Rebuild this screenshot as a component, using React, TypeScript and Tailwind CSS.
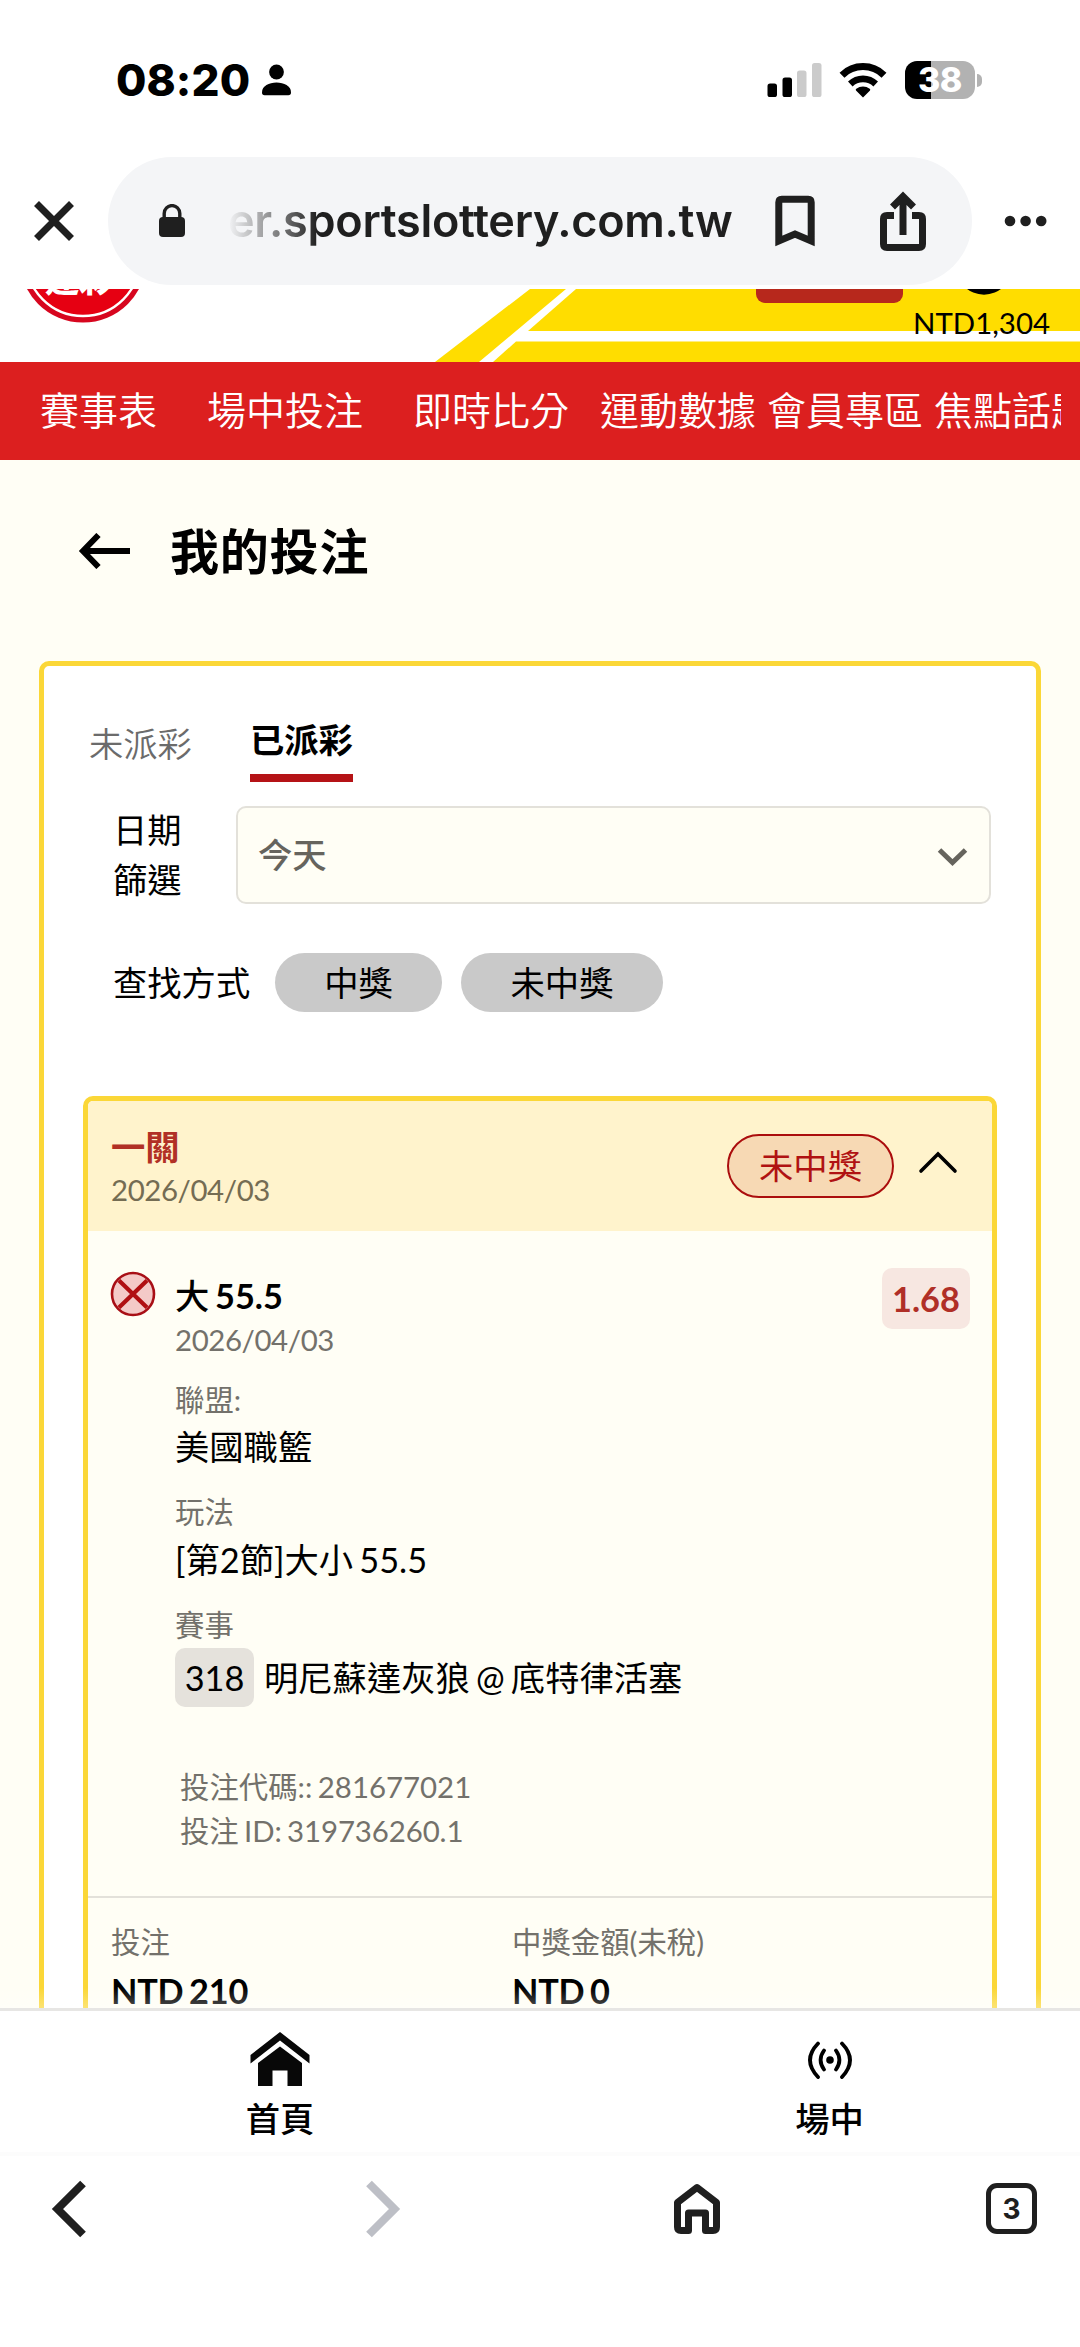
import { ReactNode } from 'react';
import { twMerge } from 'tailwind-merge';

const pageFont = "font-['Lato','Noto_Sans_CJK_TC',sans-serif]";
const systemFont = "font-['Inter',sans-serif]";
const mutedText = 'text-[#73716b]';
const yellowBorder = 'border-[5px] border-[#fbd737]';

const StatusBar = () => {
  return (
    <div className={twMerge('flex h-[157px] shrink-0 pt-[50px] text-black', systemFont)}>
      <div className="flex h-[60px] w-full items-center pl-[116px] pr-[98px]">
        <div className="w-[134px] whitespace-nowrap text-[44px] font-extrabold leading-[60px] tracking-[0.1px]">08:20</div>
        <svg className="ml-[11px]" width="31" height="32" viewBox="0 0 31 32">
          <circle cx="15.5" cy="8" r="7.4" />
          <path d="M1 28.5C1 22 8 18.6 15.5 18.6S30 22 30 28.5q0 2.8-2.6 2.8H3.6Q1 31.3 1 28.5z" />
        </svg>

        <svg className="ml-auto" width="55" height="36" viewBox="0 0 55 36">
          <rect x="0.5" y="21.5" width="9.5" height="13.5" rx="2.6" />
          <rect x="15.5" y="15.5" width="9.5" height="19.5" rx="2.6" />
          <rect x="30" y="8.5" width="9.5" height="26.5" rx="2.6" fill="#cbcbcb" />
          <rect x="45" y="1" width="9.5" height="34" rx="2.6" fill="#cbcbcb" />
        </svg>
        <svg className="ml-[17px]" width="48" height="36" viewBox="0 0 48 36">
          <path d="M3 13.2a30 30 0 0 1 42 0" fill="none" stroke="#000" strokeWidth="7" />
          <path d="M11.3 22a18.3 18.3 0 0 1 25.4 0" fill="none" stroke="#000" strokeWidth="6.6" />
          <path d="M24 35.4l-7-7q-.7-.9.3-1.6a11.4 11.4 0 0 1 13.4 0q1 .7.3 1.6z" />
        </svg>
        <div className="ml-[18px] flex h-[38px] w-[70px] items-center justify-center rounded-[12px] bg-[linear-gradient(90deg,#000_26px,#b2b2b2_26px)] text-[34px] font-extrabold leading-[38px] tracking-[-0.5px] text-white">
          38
        </div>
        <div className="ml-[2px] h-[13px] w-[5px] rounded-r-full bg-[#b2b2b2]" />
      </div>
    </div>
  );
};

const AddressBar = () => {
  return (
    <div className={twMerge('mb-[4px] flex h-[128px] shrink-0 items-center text-[#1f1f1f]', systemFont)}>
      <svg className="ml-[33px]" width="42" height="42" viewBox="0 0 42 42" fill="none" stroke="#1f1f1f" strokeWidth="7">
        <path d="M3.5 3.5l35 35M38.5 3.5l-35 35" />
      </svg>
      <div className="ml-[33px] flex h-full w-[864px] items-center rounded-full bg-[#f4f5f7]">
        <svg className="ml-[51px]" width="26" height="34" viewBox="0 0 26 34">
          <path d="M5.2 15V9.4a7.8 7.8 0 0 1 15.6 0V15" fill="none" stroke="#1f1f1f" strokeWidth="3.4" />
          <rect x="0" y="13" width="26" height="20" rx="4" fill="#1f1f1f" />
        </svg>
        <div className="ml-[43px] w-[510px] whitespace-nowrap bg-[linear-gradient(90deg,#f4f5f700_0px,#1f1f1f_90px)] bg-clip-text text-[45px] font-semibold leading-[64px] tracking-[-0.3px] text-transparent">
          er.sportslottery.com.tw
        </div>
        <svg className="ml-[37px]" width="40" height="52" viewBox="0 0 40 52" fill="none" stroke="#1f1f1f" strokeWidth="7">
          <path d="M3.8 46V7.3q0-3 3-3h26.4q3 0 3 3V46L20 39z" />
        </svg>
        <svg className="ml-[64px]" width="48" height="62" viewBox="0 0 48 62" fill="none" stroke="#1f1f1f" strokeWidth="7">
          <path d="M15 25.5H8q-3.5 0-3.5 3.5v25q0 3.5 3.5 3.5h32q3.5 0 3.5-3.5V29q0-3.5-3.5-3.5h-7" />
          <path d="M24 45V7M13.5 17L24 6.5 34.5 17" />
        </svg>
      </div>
      <svg className="ml-[32px]" width="43" height="12" viewBox="0 0 43 12" fill="#1f1f1f">
        <circle cx="6" cy="6" r="5.3" />
        <circle cx="21.6" cy="6" r="5.3" />
        <circle cx="37.2" cy="6" r="5.3" />
      </svg>
    </div>
  );
};

const SiteBanner = () => {
  return (
    <div className="relative flex h-[73px] shrink-0 justify-end overflow-hidden bg-white">
      <svg className="absolute inset-0" width="1080" height="73" viewBox="0 0 1080 73">
        <path d="M435 73L530 0h36L479 73z" fill="#ffdd00" />
        <path d="M576 0h504v42H528z" fill="#ffdd00" />
        <path d="M516 52.5h564V73H493z" fill="#ffdd00" />
        <circle cx="83" cy="-30" r="63.5" fill="#d7061f" />
        <circle cx="83" cy="-30" r="57" fill="#e60012" stroke="#fff" strokeWidth="2.4" />
        <text x="45" y="3" fill="#fff" fontSize="34" fontWeight="900" fontFamily="Noto Sans CJK TC">
          運彩
        </text>
        <circle cx="984" cy="-22.3" r="28" fill="#000" />
      </svg>
      <div className="relative mr-[10px] h-[14px] w-[147px] rounded-b-[9px] bg-[#b7281c]" />
      <div className="relative mr-[30px] mt-[14px] text-[29.4px] leading-[40px] text-black">NTD1,304</div>
    </div>
  );
};

const navItems = [
  { label: '賽事表', className: 'w-[167px]' },
  { label: '場中投注', className: 'w-[206px]' },
  { label: '即時比分', className: 'w-[187px]' },
  { label: '運動數據', className: 'w-[167px]' },
  { label: '會員專區', className: 'w-[167px]' },
  { label: '焦點話題', className: 'w-[127px] overflow-hidden' }
];

const SiteNav = () => {
  return (
    <div className="flex h-[98px] shrink-0 items-center bg-[#dc1f1f] pb-[2px] pl-[40px] text-[39px] font-[350] text-white">
      {navItems.map((item) => (
        <div key={item.label} className={twMerge('shrink-0 whitespace-nowrap leading-[60px]', item.className)}>
          {item.label}
        </div>
      ))}
    </div>
  );
};

const FilterPill = ({ children, className }: { children: ReactNode; className?: string }) => {
  return (
    <div className={twMerge('flex h-[59px] items-center justify-center rounded-full bg-[#c9c9c9]', className)}>
      {children}
    </div>
  );
};

const Filters = () => {
  return (
    <>
      <div className="flex h-[66px] pl-[45px] leading-[48px]">
        <div className="mt-[4px] w-[161px] font-[350] text-[#6b6b6b]">未派彩</div>
        <div className="h-[66px] border-b-[8px] border-[#b51316] font-bold">已派彩</div>
      </div>

      <div className="mt-[24px] flex h-[98px] items-center">
        <div className="ml-[69px] w-[123px] pr-[50px] leading-[50px]">日期 篩選</div>
        <div className="flex h-full w-[755px] items-center justify-between rounded-[10px] border-2 border-[#e3e1da] bg-[#fffef5] pl-[20px] pr-[21px] font-medium text-[#66645d]">
          今天
          <svg className="mt-[3px]" width="31" height="18" viewBox="0 0 31 18" fill="none" stroke="#66645d" strokeWidth="5">
            <path d="M2.5 2l13 12.5L28.5 2" />
          </svg>
        </div>
      </div>

      <div className="mt-[49px] flex h-[59px] items-center">
        <div className="ml-[69px] w-[162px]">查找方式</div>
        <FilterPill className="w-[167px]">中獎</FilterPill>
        <FilterPill className="ml-[19px] w-[202px]">未中獎</FilterPill>
      </div>
    </>
  );
};

const BetHeader = () => {
  return (
    <div className="flex h-[130px] items-center bg-[#fff3cc] pl-[23px] pr-[34px]">
      <div className="h-full pt-[24px]">
        <div className="font-bold leading-[44px] text-[#b13025]">一關</div>
        <div className="mt-[4px] text-[29.4px] leading-[34px] tracking-[-0.4px] text-[#746c53]">2026/04/03</div>
      </div>
      <div className="ml-auto flex h-[64px] w-[167px] items-center justify-center rounded-full border-[2.4px] border-[#ab0d0d] bg-[#f7d9b4] text-[#b01212]">
        未中獎
      </div>
      <svg className="mb-[8px] ml-[24px]" width="40" height="24" viewBox="0 0 40 24" fill="none" stroke="#000" strokeWidth="3.6" strokeLinecap="round">
        <path d="M3 21L20 4l17 17" />
      </svg>
    </div>
  );
};

const Label = ({ children, className }: { children: ReactNode; className?: string }) => {
  return (
    <div className={twMerge('text-[29.4px] leading-[40px] [word-spacing:-2px]', mutedText, className)}>{children}</div>
  );
};

const BetSelection = () => {
  return (
    <div className="flex h-[665px] pl-[22px] pr-[22px]">
      <svg className="mt-[40px]" width="46" height="46" viewBox="0 0 46 46">
        <circle cx="23" cy="23" r="21" fill="#f4cac8" stroke="#a80f16" strokeWidth="2.6" />
        <path d="M9 9.5l28 27M37 9.5l-28 27" stroke="#b00f12" strokeWidth="4.2" />
      </svg>
      <div className="ml-[19px] mt-[43px] flex-1 leading-[44px]">
        <div className="font-bold">
          <span className="font-medium">大</span> 55.5
        </div>
        <Label className="mt-[2px] tracking-[-0.4px]">2026/04/03</Label>
        <Label className="mt-[20px]">聯盟:</Label>
        <div className="mt-[5px]">美國職籃</div>
        <Label className="mt-[23px]">玩法</Label>
        <div className="mt-[6px]">[第2節]大小 55.5</div>
        <Label className="mt-[23px]">賽事</Label>
        <div className="mt-[3px] flex h-[59px] items-center">
          <div className="flex h-full w-[79px] items-center justify-center rounded-[10px] bg-[#e5e2dc]">318</div>
          <div className="ml-[10px]">明尼蘇達灰狼 @ 底特律活塞</div>
        </div>
        <div className="ml-[5px] mt-[58px]">
          <Label className="leading-[44px]">投注代碼:: 281677021</Label>
          <Label className="leading-[44px] tracking-[-0.1px]">投注 ID: 319736260.1</Label>
        </div>
      </div>
      <div className="mt-[37px] flex h-[61px] w-[88px] items-center justify-center rounded-[10px] bg-[#f7e7e1] font-bold text-[#b02f27]">
        1.68
      </div>
    </div>
  );
};

const BetTotals = () => {
  return (
    <div className="flex border-t-2 border-[#e3e1da] pl-[23px] pt-[24px]">
      <div className="w-[401px]">
        <Label>投注</Label>
        <div className="mt-[12px] font-bold leading-[34px] tracking-[-0.2px]">NTD 210</div>
      </div>
      <div>
        <Label>中獎金額(未稅)</Label>
        <div className="mt-[12px] font-bold leading-[34px] tracking-[-0.2px]">NTD 0</div>
      </div>
    </div>
  );
};

const MyBets = () => {
  return (
    <div className="relative h-[1548px] shrink-0 overflow-hidden bg-[#fffef5] text-[34.3px] text-black [word-spacing:-2.6px]">
      <div className="mt-[61px] flex h-[60px] items-center pl-[78px]">
        <svg width="53" height="36" viewBox="0 0 53 36" fill="none" stroke="#000" strokeWidth="6">
          <path d="M52 18H5M20.5 2L5 18l15.5 16" />
        </svg>
        <div className="ml-[39px] text-[49px] font-bold leading-[60px] tracking-[0.8px]">我的投注</div>
      </div>

      <div className={twMerge('mx-[39px] mt-[80px] h-[1600px] rounded-[10px] bg-white pt-[50px]', yellowBorder)}>
        <Filters />
        <div className={twMerge('ml-[39px] mt-[84px] h-[1100px] w-[914px] overflow-hidden rounded-[10px] bg-[#fffef5]', yellowBorder)}>
          <BetHeader />
          <BetSelection />
          <BetTotals />
        </div>
      </div>
      <div className="absolute inset-x-0 bottom-0 h-[20px] bg-linear-to-b from-white/0 to-white/30" />
    </div>
  );
};

const SiteTabs = () => {
  return (
    <div className="flex h-[144px] shrink-0 border-t-[3px] border-[#e7e6e4] bg-white text-[34.3px] font-medium text-black">
      <div className="flex w-[560px] shrink-0 flex-col items-center pt-[20px]">
        <svg width="60" height="56" viewBox="0 0 60 56" fill="#080808">
          <path d="M30 1l29.5 23v8.5L30 9.5.5 32.5V24z" />
          <path d="M30 15.5L52 32v23H37.5V39.5h-15V55H8V32z" />
        </svg>
        <div className="mt-[10px] leading-[44px]">首頁</div>
      </div>
      <div className="flex flex-1 flex-col items-center pl-[19px] pt-[30px]">
        <svg width="46" height="38" viewBox="0 0 46 38" fill="none" stroke="#000" strokeWidth="3.8" strokeLinecap="round">
          <circle cx="23" cy="19" r="3.8" fill="#000" stroke="none" />
          <path d="M17 9.5q-6.8 9.5 0 19M29 9.5q6.8 9.5 0 19M11 2.5q-16 16.5 0 33.5M35 2.5q16 16.5 0 33.5" />
        </svg>
        <div className="mt-[18px] leading-[44px]">場中</div>
      </div>
    </div>
  );
};

const BrowserToolbar = () => {
  return (
    <div className="flex h-[192px] shrink-0 items-start border-t-4 border-[#fcfcfc] bg-white pt-[24px]">
      <svg className="ml-[50px]" width="38" height="58" viewBox="0 0 38 58" fill="none" stroke="#1f1f1f" strokeWidth="8">
        <path d="M33 3.5L7.5 29 33 54.5" />
      </svg>
      <svg className="ml-[276px]" width="38" height="58" viewBox="0 0 38 58" fill="none" stroke="#bdbfc6" strokeWidth="8">
        <path d="M5 3.5L30.5 29 5 54.5" />
      </svg>
      <svg className="ml-[271px] mt-[3px]" width="48" height="52" viewBox="0 0 48 52" fill="none" stroke="#1f1f1f" strokeWidth="7" strokeLinejoin="round">
        <path d="M4.5 19.5L24 4.5l19.5 15V44q0 3.5-3.5 3.5h-7.5V30h-17v17.5H8q-3.5 0-3.5-3.5z" />
      </svg>
      <div
        className={twMerge(
          'ml-[265px] mt-[3px] flex h-[51px] w-[51px] items-center justify-center rounded-[11px] border-[5px] border-[#1f1f1f] text-[28px] font-bold leading-none text-[#1f1f1f]',
          systemFont
        )}
      >
        3
      </div>
    </div>
  );
};

export default function App() {
  return (
    <div className={twMerge('flex h-[2347px] w-[1080px] flex-col overflow-hidden bg-white', pageFont)}>
      <StatusBar />
      <AddressBar />
      <SiteBanner />
      <SiteNav />
      <MyBets />
      <SiteTabs />
      <BrowserToolbar />
    </div>
  );
}
